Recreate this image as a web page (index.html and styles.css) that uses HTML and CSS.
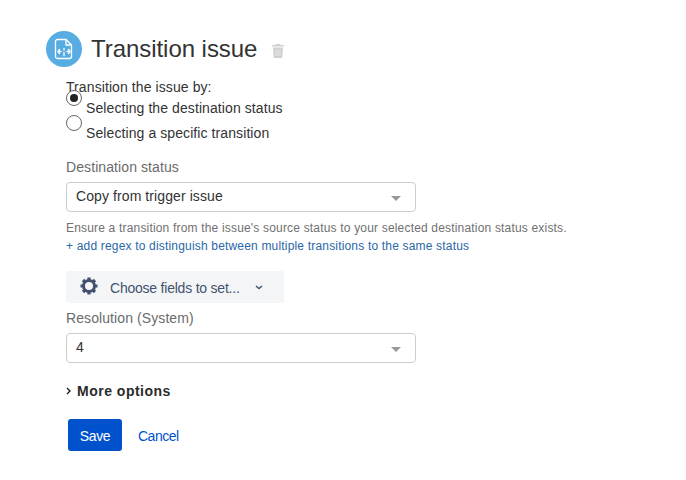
FILE: index.html
```html
<!DOCTYPE html>
<html lang="en">
<head>
  <meta charset="UTF-8">
  <title>Transition issue</title>
  <link rel="stylesheet" href="styles.css">
</head>
<body>
  <div class="header">
    <div class="icon-circle">
      <svg width="20" height="22" viewBox="0 0 20 22" fill="none" stroke="#fff" stroke-width="1.3" stroke-linecap="round" stroke-linejoin="round">
        <path d="M3.500 1.500h8.500l5.500 5.500v11.500a2 2 0 0 1-2 2h-12a2 2 0 0 1-2-2v-15a2 2 0 0 1 2-2z"/>
        <path d="M12 1.500v5.500h5.500"/>
        <path d="M4 13.500h3M5.500 11.500l-1.500 2 1.500 2M16 13.500h-3M14.500 11.500l1.500 2-1.500 2M10 10.500v1.500M10 14.500v3"/>
      </svg>
    </div>
    <h1>Transition issue</h1>
    <svg class="trash" width="12" height="14" viewBox="0 0 12 14">
      <path fill="#d0d0d0" d="M4 0h4l.5 1H12v1.500H0V1h3.500z"/>
      <path fill="#d0d0d0" d="M1 3.500h10l-.7 9.500a1 1 0 0 1-1 1H2.700a1 1 0 0 1-1-1z"/>
      <path stroke="#e6e6e6" stroke-width="1" d="M4 5.500v6.500M6 5.500v6.500M8 5.500v6.500"/>
    </svg>
  </div>

  <div class="form">
    <div class="by-label">Transition the issue by:</div>
    <div class="radio-row first">
      <span class="radio checked"></span>
      <span class="radio-text">Selecting the destination status</span>
    </div>
    <div class="radio-row">
      <span class="radio"></span>
      <span class="radio-text">Selecting a specific transition</span>
    </div>

    <div class="field-label status-label">Destination status</div>
    <div class="select">
      <span class="select-value">Copy from trigger issue</span>
      <span class="caret"></span>
    </div>
    <div class="help">Ensure a transition from the issue's source status to your selected destination status exists.</div>
    <a class="regex-link" href="#">+ add regex to distinguish between multiple transitions to the same status</a>

    <div class="fields-btn">
      <svg width="18" height="18" viewBox="0 0 18 18" fill="none" stroke="#42526e">
        <circle cx="9" cy="9" r="5.500" stroke-width="3"/>
        <path stroke-width="3.200" d="M9 0.500v2.500M9 15v2.500M0.500 9h2.500M15 9h2.500M3 3l1.800 1.800M13.200 13.200L15 15M3 15l1.800-1.800M13.200 4.800L15 3"/>
      </svg>
      <span class="fields-text">Choose fields to set...</span>
      <svg class="fields-chevron" width="8" height="5" viewBox="0 0 8 5" fill="none" stroke="#42526e" stroke-width="1.500">
        <path d="M1 1l3 2.500L7 1"/>
      </svg>
    </div>

    <div class="field-label resolution-label">Resolution (System)</div>
    <div class="select">
      <span class="select-value">4</span>
      <span class="caret"></span>
    </div>

    <div class="more">
      <svg width="5" height="8" viewBox="0 0 5 8" fill="none" stroke="#222" stroke-width="1.400">
        <path d="M1 1l3 3-3 3"/>
      </svg>
      <span>More options</span>
    </div>

    <div class="actions">
      <button class="save">Save</button>
      <a class="cancel" href="#">Cancel</a>
    </div>
  </div>
</body>
</html>
```

FILE: styles.css
```css
body {
  font-family: "Liberation Sans", Arial, sans-serif;
  margin: 0;
  padding: 31px 0 0 46px;
  background: #fff;
  color: #333;
  font-size: 14px;
  letter-spacing: 0.09px;
}

.header {
  display: flex;
  align-items: center;
  height: 36px;
}

.icon-circle {
  width: 36px;
  height: 36px;
  border-radius: 50%;
  background: #57ade2;
  display: flex;
  align-items: center;
  justify-content: center;
}

h1 {
  font-size: 24px;
  font-weight: 400;
  margin: 0 0 0 9px;
  line-height: 36px;
  color: #333;
  letter-spacing: -0.05px;
}

.trash {
  margin: 3px 0 0 15px;
}

.form {
  padding-left: 20px;
  margin-top: 12px;
}

.by-label {
  line-height: 16px;
}

.radio-row {
  display: flex;
  height: 25px;
}

.radio-row.first {
  margin-top: -5px;
}

.radio {
  width: 14px;
  height: 14px;
  border: 1px solid #666;
  border-radius: 50%;
  background: #fff;
  display: flex;
  align-items: center;
  justify-content: center;
  flex-shrink: 0;
}

.radio.checked::before {
  content: '';
  width: 8px;
  height: 8px;
  border-radius: 50%;
  background: #222;
}

.radio-text {
  margin: 10px 0 0 4px;
  line-height: 16px;
}

.field-label {
  color: #6b6b6b;
  line-height: 18px;
}

.status-label {
  margin-top: 18px;
}

.resolution-label {
  margin-top: 6px;
}

.select {
  width: 350px;
  height: 30px;
  box-sizing: border-box;
  border: 1px solid #ccc;
  border-radius: 4px;
  margin-top: 6px;
  padding: 0 14px 0 9px;
  display: flex;
  align-items: center;
  justify-content: space-between;
  color: #333;
}

.select-value {
  padding-bottom: 2px;
}

.caret {
  width: 0;
  height: 0;
  border-left: 5px solid transparent;
  border-right: 5px solid transparent;
  border-top: 5px solid #999;
  margin-top: 2px;
}

.help {
  color: #707070;
  font-size: 12px;
  letter-spacing: 0.18px;
  line-height: 18px;
  margin-top: 7px;
}

.regex-link {
  display: block;
  color: #2a67a8;
  font-size: 12px;
  letter-spacing: 0.18px;
  line-height: 18px;
  text-decoration: none;
}

.fields-btn {
  width: 218px;
  height: 32px;
  background: #f4f5f7;
  border-radius: 3px;
  margin-top: 16px;
  display: flex;
  align-items: center;
  padding: 0 0 2px 14px;
  box-sizing: border-box;
  color: #42526e;
}

.fields-text {
  margin: 3px 0 0 12px;
  letter-spacing: -0.22px;
}

.fields-chevron {
  margin: 2px 0 0 15px;
}

.more {
  display: flex;
  align-items: center;
  margin-top: 19px;
  height: 18px;
  font-weight: 700;
  letter-spacing: 0.5px;
  color: #2b2b2b;
}

.more span {
  margin-left: 6px;
}

.actions {
  display: flex;
  align-items: center;
  margin: 19px 0 0 2px;
}

.save {
  width: 54px;
  height: 32px;
  padding-top: 2px;
  border: none;
  border-radius: 3px;
  background: #0052cc;
  color: #fff;
  font: 14px "Liberation Sans", Arial, sans-serif;
  letter-spacing: -0.4px;
}

.cancel {
  color: #0052cc;
  text-decoration: none;
  margin: 2px 0 0 16px;
  letter-spacing: -0.5px;
}
```
